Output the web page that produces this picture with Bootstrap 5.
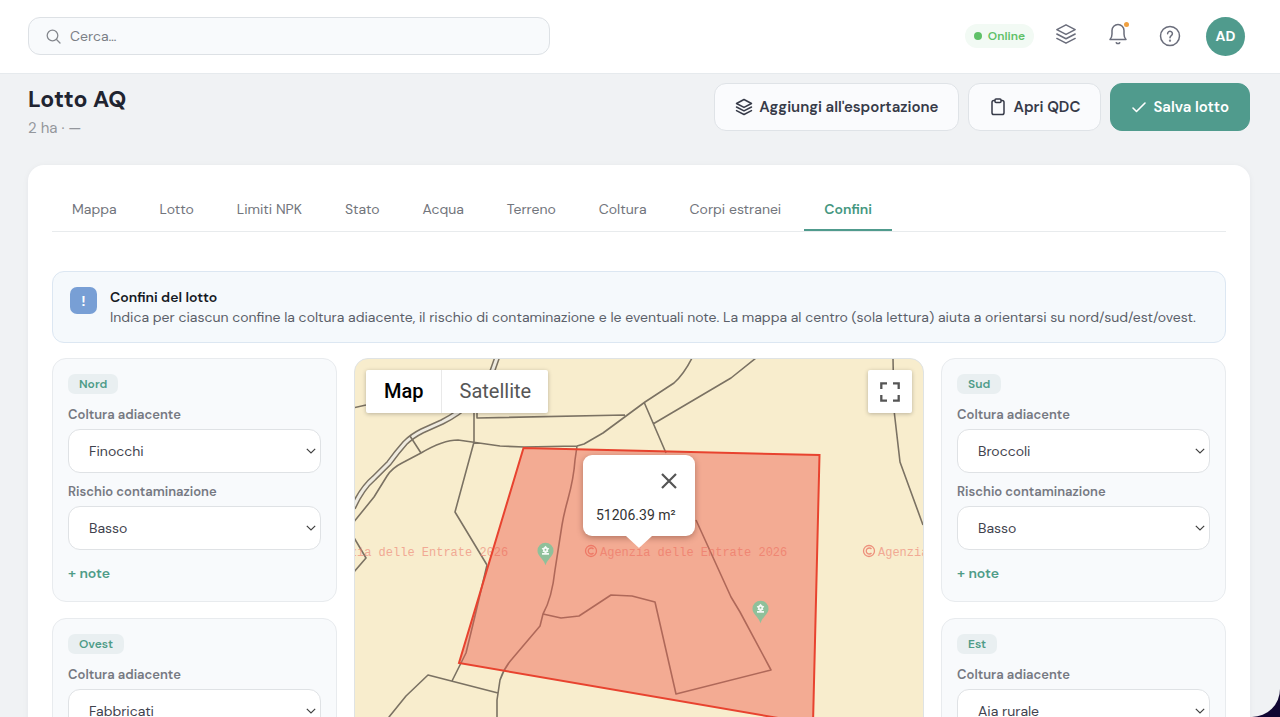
<!DOCTYPE html>
<html lang="it">
<head>
<meta charset="utf-8">
<meta name="viewport" content="width=device-width, initial-scale=1">
<title>Lotto AQ</title>
<link href="https://cdn.jsdelivr.net/npm/bootstrap@5.3.0/dist/css/bootstrap.min.css" rel="stylesheet">
<style>
  :root { --brand: #509b8d; --line: #e2e6e9; --soft: #f8fafc; }
  body { font-family: "DM Sans", Inter, "Liberation Sans", sans-serif; font-size: 14px; color: #30343f; background: #100632; }
  .shell { background: #f0f2f4; border-bottom-right-radius: 28px; }
  .topbar { height: 74px; padding: 0 35px 1px 28px; border-bottom: 1px solid #e6eaed; }
  .search-box { width: 522px; height: 38px; padding: 0 17px; gap: 9px; border: 1px solid #dde1e5; border-radius: 12px; background: var(--soft); color: #85888e; }
  .search-box input { font-size: 14px; color: #6b6f78; }
  .search-box input::placeholder { color: #7b7f86; }
  .tools { gap: 12px; }
  .online { height: 24px; padding: 0 9px; gap: 6px; border-radius: 12px; background: #f2faf4; color: #5fc168; font-size: 12px; font-weight: 600; }
  .dot-on { width: 8px; height: 8px; border-radius: 50%; background: #5fc168; }
  .tool { width: 40px; height: 40px; color: #6a6d7b; }
  .dot-new { position: absolute; top: 6px; right: 9px; width: 5px; height: 5px; border-radius: 50%; background: #f0a040; }
  .avatar { width: 39px; height: 39px; background: var(--brand); font-size: 14px; }
  .content { padding: 9px 30px 0 28px; scrollbar-width: none; }
  .page-title { font-size: 23px; line-height: 32px; color: #1f2430; }
  .page-sub { font-size: 15px; line-height: 26px; color: #94979c; }
  .acts { gap: 9px; }
  .act { height: 48px; padding: 0 20px; gap: 6px; border-radius: 12px; font-size: 15px; font-weight: 600; border: 1px solid #dfe3e7; background: #fafbfd; color: #363a48; }
  .act:hover { background: #fff; }
  .act-main, .act-main:hover { background: var(--brand); border-color: var(--brand); color: #fff; }
  .sheet { border-radius: 16px; padding: 24px 24px 40px; margin-top: 24px; box-shadow: 0 1px 6px rgba(30,40,60,.05); }
  .tabs { border-bottom: 1px solid #e8ebed; margin-bottom: 39px; }
  .tabs .nav-link { padding: 10px 20px; line-height: 20px; margin-right: 3px; color: #72757c; border-bottom: 2px solid transparent; }
  .tabs .nav-link.active { color: #45977f; font-weight: 600; border-color: var(--brand); }
  .notice { padding: 15px 17px; gap: 13px; border: 1px solid #dce7f2; border-radius: 12px; background: #f5f9fc; line-height: 20px; color: #5b6069; }
  .notice-mark { width: 27px; height: 27px; border-radius: 7px; background: #789fd5; font-size: 14px; }
  .notice-title { color: #161a24; font-weight: 600; }
  .bounds { display: grid; grid-template-columns: 1fr 2fr 1fr; gap: 16px 17px; margin-top: 15px; }
  .side { padding: 15px; min-height: 244px; border: 1px solid #e8ebee; border-radius: 14px; background: var(--soft); }
  .side-tag { height: 20px; margin-bottom: 11px; padding: 0 11px; border-radius: 7px; background: #e9eff1; color: #4f9c88; font-size: 12px; font-weight: 600; }
  .side label { line-height: 20px; margin-bottom: 4px; font-size: 13px; font-weight: 600; color: #767982; }
  .side .form-select { height: 44px; padding: 0 32px 0 20px; font-size: 14px; color: #3f434e; border: 1px solid #dfe2e5; border-radius: 12px; background-position: right 3px center; background-size: 12px 12px; margin-bottom: 9px;
    background-image: url("data:image/svg+xml,%3Csvg xmlns='http://www.w3.org/2000/svg' viewBox='0 0 12 12'%3E%3Cpath d='M1.800 3.800 6 8l4.200-4.200' fill='none' stroke='%23444' stroke-width='1.200'/%3E%3C/svg%3E"); }
  .add-note { color: #4f9c88; font-size: 14px; font-weight: 600; line-height: 20px; margin-top: 4px; }
  .map { grid-column: 2; grid-row: 1 / span 2; border: 1px solid #dfe3e4; border-radius: 14px; background: #f8edcd; font-family: Roboto, sans-serif; }
  .map-art { position: absolute; inset: 0; }
  .map-ctl { box-shadow: 0 1px 4px rgba(0,0,0,.25); border-radius: 2px; background: #fff; }
  .map-types { position: absolute; top: 11px; left: 11px; height: 43px; }
  .map-types button { font-size: 20px; line-height: 43px; padding: 0 17px 0 18px; color: #565656; }
  .map-types button.on { color: #000; font-weight: 500; border-right: 1px solid #e9e9e9 !important; }
  .map-full { position: absolute; top: 11px; right: 11px; width: 44px; height: 43px; color: #555; }
  .bubble { position: absolute; left: 50%; top: 96px; width: 112px; height: 81px; margin-left: -56px; border-radius: 9px; background: #fff; box-shadow: 0 2px 6px rgba(60,20,10,.35); color: #333; font-size: 14px; }
  .bubble::after { content: ""; position: absolute; left: 43px; top: 100%; border: 13px solid transparent; border-top: 12px solid #fff; border-bottom: 0; }
  .bubble button { color: #555; margin: 17px 17px 0 0; }
  .bubble p { padding: 15px 0 0 13px; line-height: 20px; }
</style>
</head>
<body>
<svg class="d-none">
  <symbol id="layers" viewBox="0 0 24 24"><path d="M12 2 2 7.300l10 5.200 10-5.200zM2 12l10 5.200L22 12M2 16.800 12 22l10-5.200" fill="none" stroke="currentColor" stroke-linejoin="round" stroke-linecap="round"/></symbol>
  <symbol id="pin" viewBox="0 0 18 24"><path d="M9 0a8.500 8.500 0 0 0-8.500 8.500c0 3 1.500 5 4.500 8.500 2 2.500 3.300 4.500 4 7 .7-2.500 2-4.500 4-7 3-3.500 4.500-5.500 4.500-8.500A8.500 8.500 0 0 0 9 0z" fill="#8fc09a"/><path d="M9 3.300 11 5.500l2 .3-1.500 2.400.6 1.700H10.200v1h2.500v2H5.300v-2h2.500v-1H5.900l.6-1.700L5 5.800l2-.3z" fill="#fff" opacity=".9"/><circle cx="9" cy="7.500" r="1" fill="#8fc09a"/></symbol>
</svg>
<div class="shell vh-100 d-flex flex-column overflow-hidden">
  <header class="topbar bg-white d-flex align-items-center justify-content-between flex-shrink-0">
    <form class="search-box d-flex align-items-center" role="search">
      <svg width="15" height="15" viewBox="0 0 15 15" fill="none" stroke="currentColor" stroke-width="1.300" stroke-linecap="round"><circle cx="6.500" cy="6.500" r="5.300"/><path d="m10.500 10.500 3.500 3.500"/></svg>
      <input class="border-0 bg-transparent p-0 flex-grow-1" type="text" placeholder="Cerca…" aria-label="Cerca">
    </form>
    <div class="d-flex align-items-center gap-3">
      <div class="tools d-flex align-items-center">
        <span class="online d-flex align-items-center"><span class="dot-on"></span>Online</span>
        <button class="tool btn p-0 border-0 pb-1 d-flex align-items-center justify-content-center" type="button" aria-label="Livelli"><svg width="22" height="22" stroke-width="1.600"><use href="#layers"/></svg></button>
        <button class="tool btn p-0 border-0 pb-1 d-flex align-items-center justify-content-center position-relative" type="button" aria-label="Notifiche"><svg width="20" height="22" viewBox="0 0 20 22" fill="none" stroke="currentColor" stroke-width="1.500" stroke-linecap="round" stroke-linejoin="round"><path d="M2 16.500h16c-1.500-1.500-2-3-2-5.500V7.500a6 6 0 0 0-12 0V11c0 2.500-.5 4-2 5.500zM8.300 19.700c.9 1.200 2.500 1.200 3.400 0"/></svg><span class="dot-new"></span></button>
        <button class="tool btn p-0 border-0 d-flex align-items-center justify-content-center" type="button" aria-label="Aiuto"><svg width="22" height="22" viewBox="0 0 22 22" fill="none" stroke="currentColor" stroke-width="1.500" stroke-linecap="round"><circle cx="11" cy="11" r="9.500"/><path d="M8.600 8.700a2.400 2.400 0 1 1 3.700 2c-.9.600-1.300 1-1.300 2"/><circle cx="11" cy="15.700" r=".4" fill="currentColor"/></svg></button>
      </div>
      <button class="avatar btn rounded-circle border-0 p-0 text-white fw-bold" type="button">AD</button>
    </div>
  </header>

  <main class="content flex-grow-1 overflow-auto">
    <div class="d-flex justify-content-between align-items-start">
      <div>
        <h1 class="page-title fw-bold mb-0">Lotto AQ</h1>
        <p class="page-sub mb-0">2 ha · —</p>
      </div>
      <div class="acts d-flex">
        <button class="act btn d-flex align-items-center" type="button"><svg width="18" height="18" stroke-width="2"><use href="#layers"/></svg>Aggiungi all'esportazione</button>
        <button class="act btn d-flex align-items-center" type="button"><svg width="18" height="18" viewBox="0 0 18 18" fill="none" stroke="currentColor" stroke-width="1.500"><rect x="3" y="2.500" width="12" height="14" rx="1.800"/><rect x="6" y="1" width="6" height="3.500" rx="1" fill="#fafbfd"/></svg>Apri QDC</button>
        <button class="act act-main btn d-flex align-items-center" type="button"><svg width="16" height="16" viewBox="0 0 16 16" fill="none" stroke="currentColor" stroke-width="1.600" stroke-linecap="round" stroke-linejoin="round"><path d="m2 9 3.500 3.500L14 4"/></svg>Salva lotto</button>
      </div>
    </div>

    <section class="sheet bg-white">
      <nav class="tabs nav">
        <a class="nav-link" href="#">Mappa</a>
        <a class="nav-link" href="#">Lotto</a>
        <a class="nav-link" href="#">Limiti NPK</a>
        <a class="nav-link" href="#">Stato</a>
        <a class="nav-link" href="#">Acqua</a>
        <a class="nav-link" href="#">Terreno</a>
        <a class="nav-link" href="#">Coltura</a>
        <a class="nav-link" href="#">Corpi estranei</a>
        <a class="nav-link active" href="#" aria-current="page">Confini</a>
      </nav>

      <div class="notice d-flex align-items-start">
        <span class="notice-mark d-flex align-items-center justify-content-center flex-shrink-0 text-white fw-bold">!</span>
        <div>
          <div class="notice-title">Confini del lotto</div>
          <div>Indica per ciascun confine la coltura adiacente, il rischio di contaminazione e le eventuali note. La mappa al centro (sola lettura) aiuta a orientarsi su nord/sud/est/ovest.</div>
        </div>
      </div>

      <div class="bounds">
        <div class="side d-flex flex-column align-items-start">
          <span class="side-tag d-flex align-items-center">Nord</span>
          <label for="n-col">Coltura adiacente</label>
          <select id="n-col" class="form-select"><option>Finocchi</option></select>
          <label for="n-ris">Rischio contaminazione</label>
          <select id="n-ris" class="form-select"><option>Basso</option></select>
          <button class="add-note btn border-0 p-0" type="button">+ note</button>
        </div>

        <div class="map position-relative overflow-hidden">
          <svg class="map-art w-100 h-100" viewBox="355 359 568 502" preserveAspectRatio="xMidYMin slice" fill="none">
            <path d="M498 355 492 372C480 398 462 412 442 422L422 431Q412 436 405 443 397 452 389 463L374 478Q362 488 353 508" stroke="#7b7263" stroke-width="6"/>
            <path d="M498 355 492 372C480 398 462 412 442 422L422 431Q412 436 405 443 397 452 389 463L374 478Q362 488 353 508" stroke="#efebe0" stroke-width="3"/>
            <g stroke="#7b7263" stroke-width="1.600" stroke-linejoin="round">
              <path d="M353 408 366 405M474 400V442L455 512 487 565M477 405V418L625 415M410 436 421 453M353 523 374 497 387 476Q392 468 402 463L421 453Q443 440 458 440L500 446 524 447 577 446 584 444 603 433 645 402 674 383Q684 374 692 358M644 402 666 453M653 424 731 378 756 358M353 536 366 558 353 573M577 446 575 460C573 490 566 500 562 525L555 570Q552 598 543 614L540 626 512 659Q504 668 500 680L497 700 497 717 490 740M543 614 561 618 579 616 611 595 632 596 655 602 676 694 771 670 740 612 731 597 696 520M389 717 406 696 428 675 498 693M452 681 466 653 474 620 487 565M893 358 894 410 900 462 923 525M389 717 370 740 353 752M490 740 540 800 560 870"/>
            </g>
            <g font-family="Liberation Mono, monospace" font-size="12" fill="#ee8576" opacity=".65">
              <text x="321" y="556">Agenzia delle Entrate 2026</text>
              <text x="600" y="556">Agenzia delle Entrate 2026</text>
              <text x="878" y="556">Agenzia delle Entrate 2026</text>
              <g stroke="#e95f50" stroke-width="1.300"><circle cx="591" cy="551" r="5.500" fill="none"/><path fill="none" d="M593.500 549a3 3 0 1 0 0 4"/><circle cx="869" cy="551" r="5.500" fill="none"/><path fill="none" d="M871.500 549a3 3 0 1 0 0 4"/></g>
            </g>
            <path d="M523.500 448 819.500 455 813 724 459 663z" fill="#ee5e4e" fill-opacity=".46" stroke="#e8432f" stroke-width="2"/>
            <use href="#pin" x="537" y="542" width="17" height="24"/>
            <use href="#pin" x="752" y="600" width="17" height="24"/>
          </svg>
          <div class="map-types map-ctl d-flex">
            <button class="on border-0 bg-transparent" type="button">Map</button>
            <button class="border-0 bg-transparent" type="button">Satellite</button>
          </div>
          <button class="map-full map-ctl border-0 p-0 d-flex align-items-center justify-content-center" type="button" aria-label="Schermo intero"><svg width="20" height="20" viewBox="0 0 20 20" fill="none" stroke="currentColor" stroke-width="2.300"><path d="M1.300 7V1.300H7M13 1.300h5.700V7M18.700 13v5.700H13M7 18.700H1.300V13"/></svg></button>
          <div class="bubble">
            <button class="btn border-0 p-0 d-flex ms-auto" type="button" aria-label="Chiudi"><svg width="18" height="18" viewBox="0 0 18 18" stroke="currentColor" stroke-width="2.200"><path d="M2 2 16 16M16 2 2 16"/></svg></button>
            <p class="mb-0">51206.39 m²</p>
          </div>
        </div>

        <div class="side d-flex flex-column align-items-start">
          <span class="side-tag d-flex align-items-center">Sud</span>
          <label for="s-col">Coltura adiacente</label>
          <select id="s-col" class="form-select"><option>Broccoli</option></select>
          <label for="s-ris">Rischio contaminazione</label>
          <select id="s-ris" class="form-select"><option>Basso</option></select>
          <button class="add-note btn border-0 p-0" type="button">+ note</button>
        </div>
        <div class="side d-flex flex-column align-items-start">
          <span class="side-tag d-flex align-items-center">Ovest</span>
          <label for="o-col">Coltura adiacente</label>
          <select id="o-col" class="form-select"><option>Fabbricati</option></select>
          <label for="o-ris">Rischio contaminazione</label>
          <select id="o-ris" class="form-select"><option>Basso</option></select>
          <button class="add-note btn border-0 p-0" type="button">+ note</button>
        </div>
        <div class="side d-flex flex-column align-items-start">
          <span class="side-tag d-flex align-items-center">Est</span>
          <label for="e-col">Coltura adiacente</label>
          <select id="e-col" class="form-select"><option>Aia rurale</option></select>
          <label for="e-ris">Rischio contaminazione</label>
          <select id="e-ris" class="form-select"><option>Basso</option></select>
          <button class="add-note btn border-0 p-0" type="button">+ note</button>
        </div>
      </div>
    </section>
  </main>
</div>
<script src="https://cdn.jsdelivr.net/npm/bootstrap@5.3.0/dist/js/bootstrap.bundle.min.js"></script>
</body>
</html>
